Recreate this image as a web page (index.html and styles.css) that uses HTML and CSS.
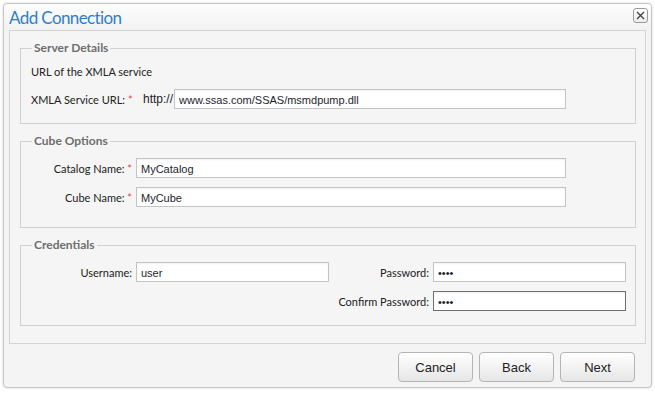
FILE: index.html
```html
<!DOCTYPE html>
<html lang="en">
<head>
  <meta charset="UTF-8">
  <title>Add Connection</title>
  <link rel="stylesheet" href="styles.css">
</head>
<body>
  <div class="dialog">
    <div class="dialog-header">
      <span class="dialog-title">Add Connection</span>
      <button class="close-btn" title="Close">
        <svg width="9" height="9" viewBox="0 0 9 9"><path d="M1 1 L8 8 M8 1 L1 8" stroke="#444" stroke-width="1.4" fill="none"/></svg>
      </button>
    </div>

    <div class="panel">
      <fieldset>
        <legend>Server Details</legend>
        <div class="hint">URL of the XMLA service</div>
        <div class="url-row">
          <label class="url-label">XMLA Service URL: <span class="req">*</span></label>
          <span class="prefix">http://</span>
          <input type="text" class="url-input" value="www.ssas.com/SSAS/msmdpump.dll">
        </div>
      </fieldset>

      <fieldset>
        <legend>Cube Options</legend>
        <div class="form-grid">
          <label>Catalog Name: <span class="req">*</span></label>
          <input type="text" value="MyCatalog">
          <label>Cube Name: <span class="req">*</span></label>
          <input type="text" value="MyCube">
        </div>
      </fieldset>

      <fieldset>
        <legend>Credentials</legend>
        <div class="cred-grid">
          <label>Username:</label>
          <input type="text" value="user">
          <label>Password:</label>
          <input type="password" value="pass">
          <span></span>
          <span></span>
          <label>Confirm Password:</label>
          <input type="password" class="focused" value="pass">
        </div>
      </fieldset>
    </div>

    <div class="dialog-footer">
      <button class="btn">Cancel</button>
      <button class="btn">Back</button>
      <button class="btn">Next</button>
    </div>
  </div>
</body>
</html>
```

FILE: styles.css
```css
body {
  margin: 0;
  background: #fff;
  font-family: 'Lato', 'Segoe UI', sans-serif;
  font-size: 11px;
  color: #222;
}
.dialog {
  margin: 3px;
  width: 647px;
  height: 383px;
  border: 1px solid #c6c6c6;
  border-radius: 4px;
  background: #f4f4f4;
  box-shadow: 0 0 3px rgba(0, 0, 0, 0.15);
  display: flex;
  flex-direction: column;
}
.dialog-header {
  height: 26px;
  display: flex;
  align-items: center;
  justify-content: space-between;
  padding: 0 3px 0 5px;
  background: linear-gradient(#fdfdfd, #f2f2f2);
  border-radius: 4px 4px 0 0;
}
.dialog-title {
  font-size: 17px;
  letter-spacing: -0.6px;
  color: #2f7fc7;
  margin-top: 1px;
}
.close-btn {
  width: 15px;
  height: 15px;
  padding: 0;
  margin-top: -4px;
  border: 1px solid #9a9a9a;
  border-radius: 3px;
  background: linear-gradient(#ffffff, #ececec);
  display: flex;
  align-items: center;
  justify-content: center;
}
.panel {
  margin: 0 5px;
  height: 312px;
  border: 1px solid #d3d3d3;
  background: #f5f5f5;
}
fieldset {
  margin: 10px 9px 0 10px;
  padding: 0 10px;
  border: 1px solid #d0d0d0;
  min-width: 0;
}
legend {
  padding: 0 2px;
  margin-left: 1px;
  font-size: 12px;
  font-weight: bold;
  color: #6e6e6e;
  line-height: 14px;
}
.hint {
  margin-top: 10px;
  line-height: 14px;
}
.url-row {
  display: flex;
  align-items: center;
  margin: 10px 0 14px;
}
.url-label {
  width: 112px;
  white-space: nowrap;
}
.prefix {
  font-family: 'Liberation Sans', Arial, sans-serif;
  font-size: 12px;
  width: 31px;
}
.req {
  color: #e04848;
}
input {
  box-sizing: border-box;
  height: 20px;
  margin: 0;
  padding: 1px 4px 0;
  border: 1px solid #c4c4c4;
  background: #fff;
  box-shadow: inset 0 1px 2px rgba(0, 0, 0, 0.06);
  font-family: 'Liberation Sans', Arial, sans-serif;
  font-size: 11px;
  color: #1e1e2e;
  outline: none;
}
.url-input {
  width: 392px;
}
.form-grid {
  display: grid;
  grid-template-columns: 101px 430px;
  column-gap: 4px;
  row-gap: 9px;
  align-items: center;
  margin: 10px 0 20px;
}
.cred-grid {
  display: grid;
  grid-template-columns: 101px 193px 96px 193px;
  column-gap: 4px;
  row-gap: 9px;
  align-items: center;
  margin: 10px 0 14px;
}
.form-grid label,
.cred-grid label {
  text-align: right;
  white-space: nowrap;
}
input.focused {
  border-color: #6f6f6f;
}
.dialog-footer {
  display: flex;
  justify-content: flex-end;
  gap: 6px;
  padding: 8px 16px 0 0;
}
.btn {
  width: 75px;
  height: 30px;
  border: 1px solid #b4b4b4;
  border-radius: 4px;
  background: linear-gradient(#ffffff, #e6e6e6);
  font-family: 'Liberation Sans', Arial, sans-serif;
  font-size: 13px;
  color: #222;
  cursor: pointer;
}
```
